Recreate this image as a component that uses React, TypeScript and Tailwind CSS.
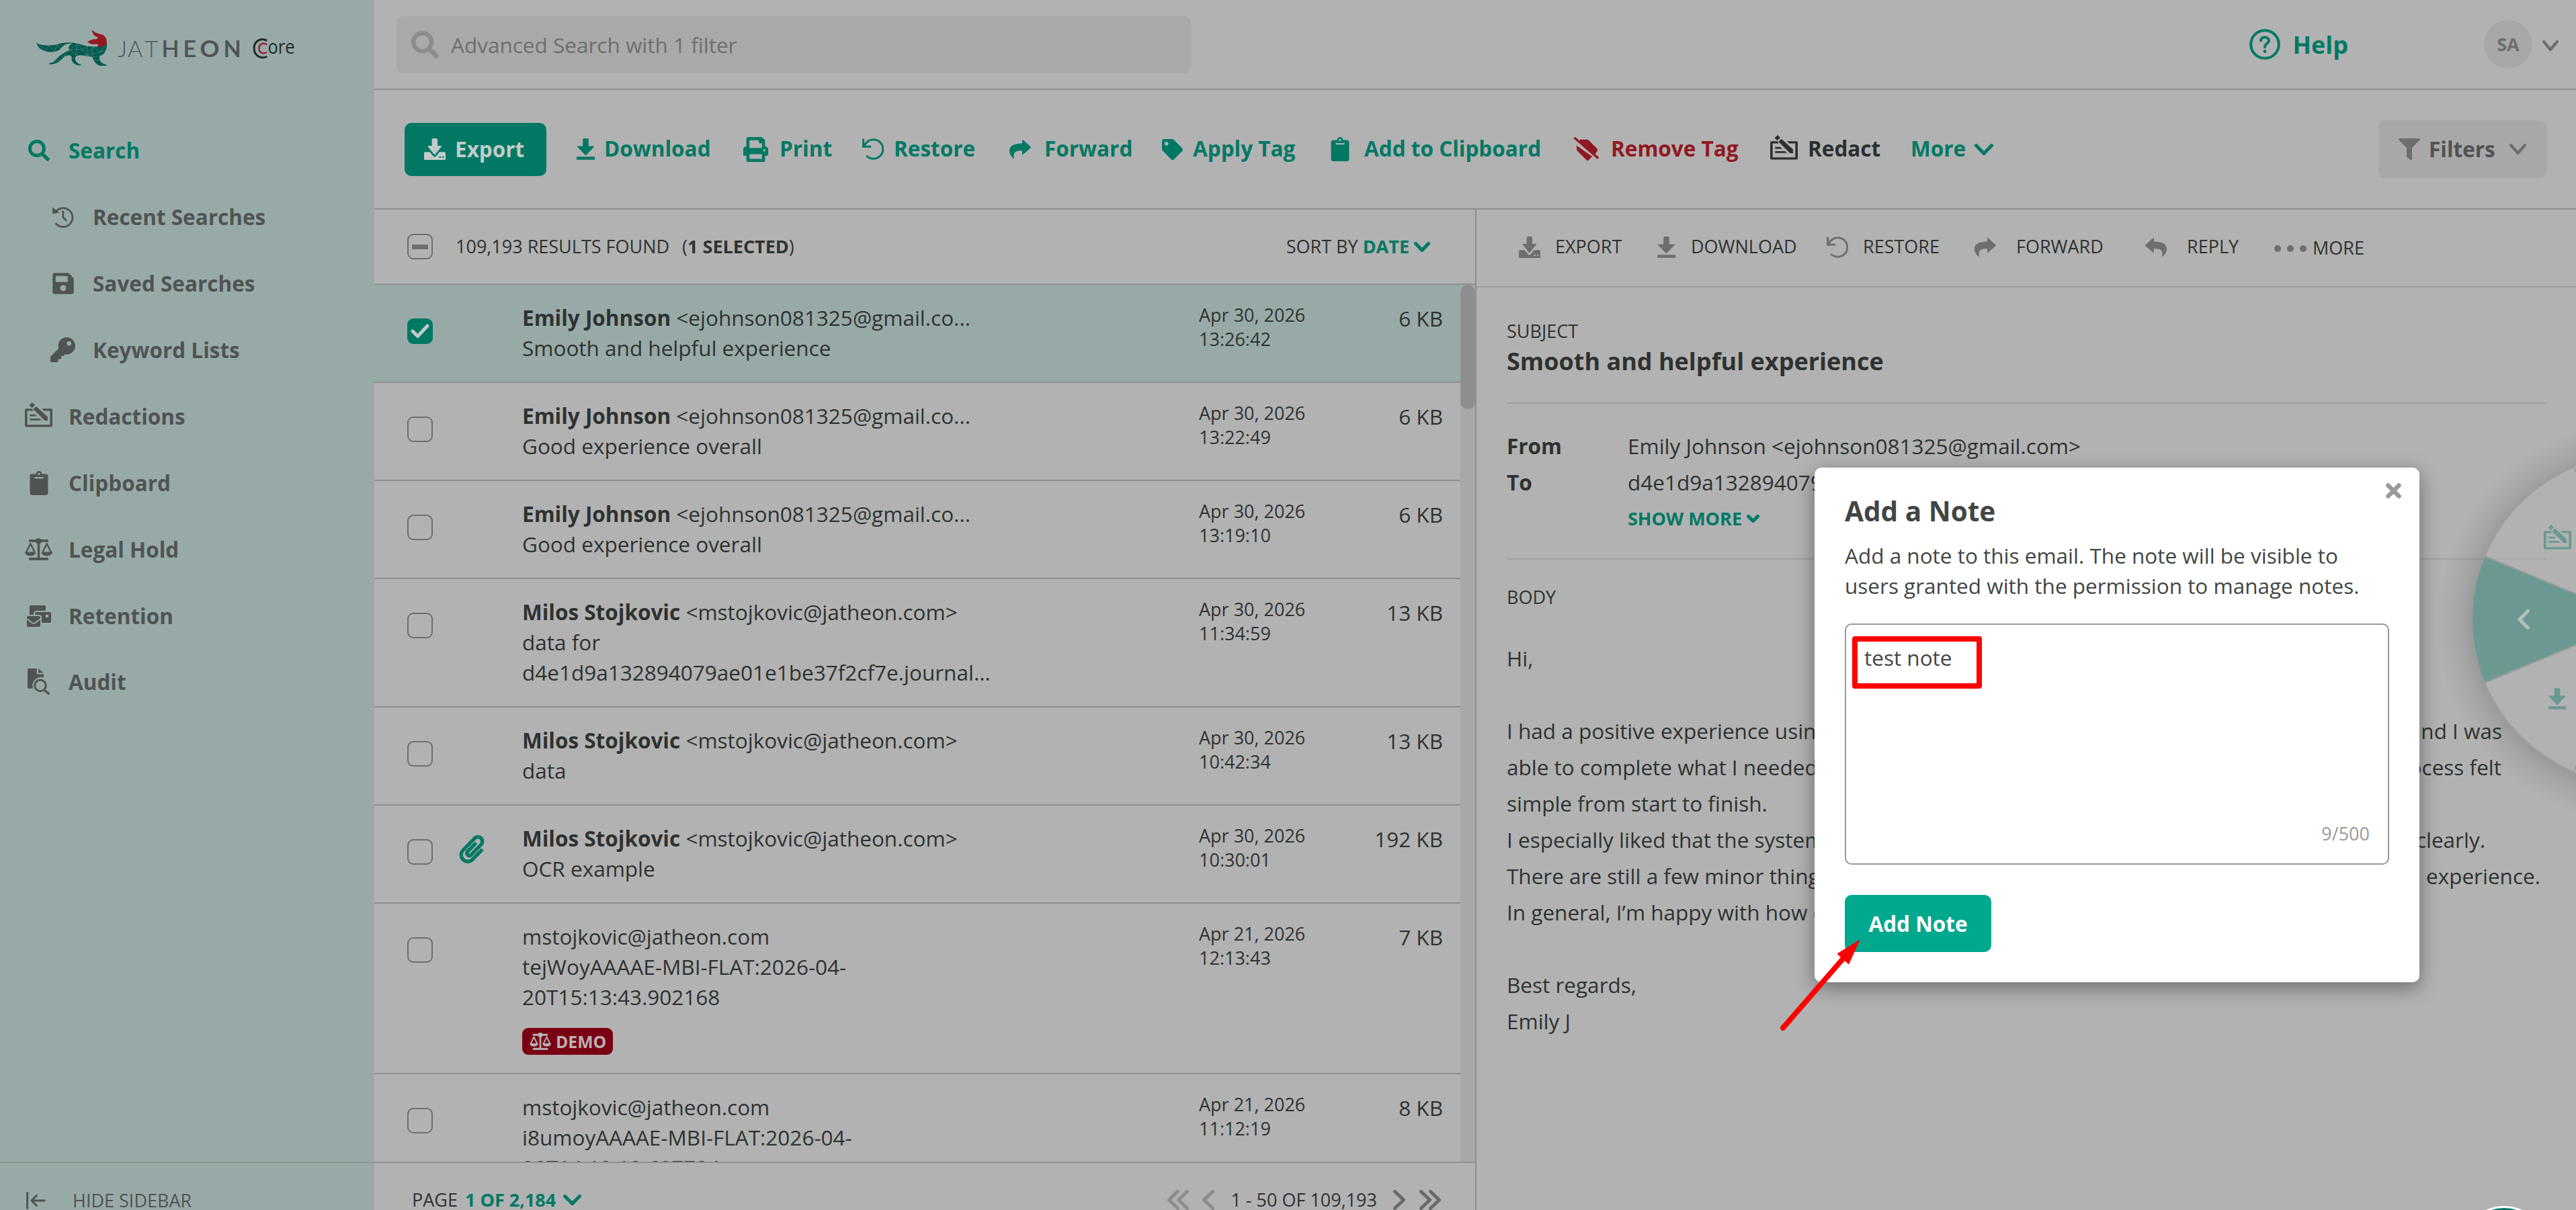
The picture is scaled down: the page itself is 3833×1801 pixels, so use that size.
import React, { useState } from 'react';
import clsx from 'clsx';
import { FaClipboard, FaFilter, FaKey, FaMailBulk, FaPaperclip, FaPrint, FaSave, FaSearch, FaTag } from 'react-icons/fa';

interface IconProps {
  className?: string;
}

interface ChevronProps extends IconProps {
  width: number;
  height: number;
  stroke?: number;
}

interface NavItem {
  label: string;
  icon: React.ReactNode;
  sub?: boolean;
  active?: boolean;
}

interface ToolItem {
  label: string;
  icon: React.ReactNode;
  className: string;
}

interface Email {
  name?: string;
  address: string;
  subject: string[];
  date: string;
  time: string;
  size: string;
  selected?: boolean;
  attachment?: boolean;
  tag?: string;
}

/* ---------- icons ---------- */

const ChevronDown = ({ width, height, stroke = 5, className }: ChevronProps) => {
  const p = stroke / 2;
  return (
    <svg width={width} height={height} className={clsx('shrink-0', className)} fill="none" stroke="currentColor" strokeWidth={stroke} strokeLinecap="round" strokeLinejoin="round">
      <path d={`M${p} ${p}L${width / 2} ${height - p}L${width - p} ${p}`} />
    </svg>
  );
};

const ChevronLeft = ({ width, height, stroke = 5, className }: ChevronProps) => {
  const p = stroke / 2;
  return (
    <svg width={width} height={height} className={clsx('shrink-0', className)} fill="none" stroke="currentColor" strokeWidth={stroke} strokeLinecap="round" strokeLinejoin="round">
      <path d={`M${width - p} ${p}L${p} ${height / 2}L${width - p} ${height - p}`} />
    </svg>
  );
};

const RedactIcon = ({ className }: IconProps) => (
  <svg viewBox="0 0 41 37" width="41" height="37" className={clsx('shrink-0', className)} fill="currentColor">
    <path d="M11 9.3H2Q0 9.3 0 11.3V34.5Q0 36.5 2 36.5H39Q41 36.5 41 34.5V11.3Q41 9.3 39 9.3H25L28.2 12.6H37.4V33.2H3.6V12.6H12.6Z" />
    <path d="M11 0L15 4L10.6 8.2L6.6 4.2Z" />
    <path d="M16.8 5.8L34 21.5V27H29.5L12.4 10Z" />
    <path d="M7.3 17.8H15.4L18 20.4H7.3ZM7.3 24H21.8L25 26.8H7.3Z" />
  </svg>
);

const ScaleIcon = ({ className }: IconProps) => (
  <svg viewBox="0 0 41 33" className={clsx('shrink-0', className)} fill="currentColor">
    <rect x="6" y="2" width="29" height="3.8" rx="1" />
    <circle cx="20.5" cy="4.4" r="4.4" />
    <rect x="18.8" y="4" width="3.4" height="27" />
    <rect x="6" y="29" width="29" height="3.8" rx="1" />
    <path d="M8.3 8.2L14.6 21M8.3 8.2L2 21M32.7 8.2L39 21M32.7 8.2L26.4 21" fill="none" stroke="currentColor" strokeWidth="2.4" strokeLinecap="round" />
    <path d="M0 20.5H16.4Q15.6 26.4 8.2 26.4T0 20.5ZM24.6 20.5H41Q40.2 26.4 32.8 26.4T24.6 20.5Z" />
  </svg>
);

const HistoryIcon = () => (
  <svg viewBox="0 0 32 32" width="32" height="32" fill="none" stroke="currentColor" strokeWidth="2.7" strokeLinecap="round" strokeLinejoin="round">
    <path d="M4.2 9A14 14 0 1 1 5.4 26" />
    <path d="M15.8 7.5V16.5L20.5 21" />
    <path d="M0 1.5L10.5 9.5L0 11.3Z" fill="currentColor" stroke="none" />
  </svg>
);

const AuditIcon = () => (
  <svg viewBox="0 0 33 39" width="33" height="39" fill="currentColor">
    <path d="M1.5 0H13.6V8.6H24V13.4Q18.6 11.8 13.6 14.8Q8 18.6 7.4 24.4Q7.2 27.4 8.4 29.8H1.5Q0 29.8 0 28.3V1.5Q0 0 1.5 0Z" />
    <path d="M16 0.2L24 6.6H16Z" />
    <circle cx="19" cy="25.4" r="8.3" fill="none" stroke="currentColor" strokeWidth="3" />
    <path d="M26.6 33.6L31.4 37.4" fill="none" stroke="currentColor" strokeWidth="3.4" strokeLinecap="round" />
  </svg>
);

const DownloadIcon = ({ className }: IconProps) => (
  <svg viewBox="0 0 27 32" width="27" height="32" className={clsx('shrink-0', className)} fill="currentColor">
    <path d="M9.2 1.6Q9.2 0 10.8 0H16.2Q17.8 0 17.8 1.6V11.6H25.4Q26.4 11.8 25.6 12.9L14.5 24.4Q13.5 25.4 12.5 24.4L1.4 12.9Q.6 11.8 1.6 11.6H9.2Z" />
    <rect y="27.2" width="27" height="4.6" rx=".6" />
  </svg>
);

const ExportIcon = () => (
  <svg viewBox="0 0 32 32" width="32" height="32" className="shrink-0" fill="currentColor">
    <path d="M11.6 1.6Q11.6 0 13.2 0H18.4Q20 0 20 1.6V11H25.4Q26.6 11.2 25.8 12.3L16.8 23.6Q15.8 24.8 14.8 23.6L5.8 12.3Q5 11.2 6.2 11H11.6Z" />
    <path fillRule="evenodd" d="M1.5 20.3H8.6L13.8 26.4Q15.8 28.4 17.8 26.4L23 20.3H30.5Q32 20.3 32 21.8V30.5Q32 32 30.5 32H1.5Q0 32 0 30.5V21.8Q0 20.3 1.5 20.3ZM22.6 26.8V29H25V26.8ZM27 26.8V29H29.4V26.8Z" />
  </svg>
);

const RestoreIcon = () => (
  <svg viewBox="0 0 32 32" width="32" height="32" className="shrink-0" fill="none" stroke="currentColor" strokeWidth="3">
    <path d="M1.6 .5V12.2H13.2" />
    <path d="M2.4 11.6C6 4.8 11 1.7 16.6 1.7A14.2 14.2 0 0 1 16.6 30.2C12.6 30.2 9 28.6 6.4 26" />
  </svg>
);

const ForwardIcon = ({ className }: IconProps) => (
  <svg viewBox="0 0 32 28" width="32" height="28" className={clsx('shrink-0', className)} fill="currentColor">
    <path d="M19 .8Q19 -.6 20.4 .4L31.4 10.2Q32.4 11.2 31.4 12.2L20.4 21.8Q19 22.8 19 21.2V16.2C10 16 4.6 18.4 7 26.8Q7 28.4 5.6 27.4C2.4 24.8 0 21 0 16.8C0 8.4 7.6 5.6 19 5.5Z" />
  </svg>
);

const TagOffIcon = () => (
  <svg viewBox="0 0 37 36" width="37" height="36" className="shrink-0" fill="currentColor">
    <path d="M9 3.8H19.6Q21 3.8 22 4.8L34.6 17.4Q36 19 34.6 20.6L31 26.5L8 7Z" />
    <path d="M1.6 1.8L35.2 30.6" stroke="currentColor" strokeWidth="3.4" strokeLinecap="round" />
    <path d="M4 12.4L27.2 29L21.8 34.2Q20.2 35.6 18.6 34.2L5 20.6Q4 19.6 4 18.2Z" />
  </svg>
);

const HelpIcon = () => (
  <svg viewBox="0 0 46 46" width="46" height="46" fill="none" stroke="currentColor" strokeWidth="4" strokeLinecap="round">
    <circle cx="23" cy="23" r="20.8" />
    <path d="M17 17.5C17.4 14 19.6 12.6 23 12.6C26.6 12.6 29 14.6 29 17.6C29 22 23 21.6 23 27" />
    <path d="M23 33.4V33.6" strokeWidth="4.8" />
  </svg>
);

const HideIcon = () => (
  <svg viewBox="0 0 29 26" width="29" height="26" fill="none" stroke="currentColor" strokeWidth="3" strokeLinecap="round" strokeLinejoin="round">
    <path d="M1.6 1.5V24.5M8 13H27M15.5 5.5L8 13L15.5 20.5" />
  </svg>
);

const Logo = () => (
  <svg viewBox="0 0 400 64" width="400" height="64">
    <g transform="translate(-50 -40) scale(.3954 .3571)">
      <path
        fill="#00594d"
        d="M137 178C150 190 185 192 212 186C240 175 270 174 300 184C325 194 350 196 368 194C385 194 395 190 402 176C404 205 396 226 376 234C370 246 378 266 400 269V274H376C360 268 352 254 348 238C330 236 305 226 288 233C276 244 286 266 306 269L303 273C280 272 266 258 270 238C262 226 250 232 240 238C226 254 212 270 186 268C184 262 192 262 200 259C214 246 226 226 262 208C254 196 262 186 272 181C250 180 238 190 226 206C210 218 190 220 168 212C150 206 142 196 137 178Z"
      />
      <path
        fill="none"
        stroke="#7d9f9a"
        strokeWidth="1.3"
        d="M145 186L170 210L185 190L205 215L214 186L228 202L250 180M262 208L290 184L285 230L262 208L310 205L290 184M310 205L288 232M310 205L330 192L325 232L310 205M325 232L350 196L345 238L325 232L376 215L350 196M376 215L398 190M376 215L378 234L348 238M376 215L400 210M262 208L240 236L268 228M200 260L230 244M355 250L374 250M272 245L286 240"
      />
      <path
        fill="#961822"
        d="M345 123C354 136 374 142 386 144C398 152 402 164 402 180C396 192 384 192 370 198L367 190L372 184H352C340 184 334 178 328 172C340 170 344 162 362 163L372 157C356 152 348 142 345 123Z"
      />
    </g>
    <g fill="#505354" fontFamily="Lato, sans-serif" fontSize="34">
      <text x="125" y="44.5" fontWeight="300">J</text>
      <text x="140" y="44.5" fontWeight="300">A</text>
      <text x="165.5" y="44.5" fontWeight="300">T</text>
      <text x="190.5" y="44.5" fontWeight="600">H</text>
      <text x="222.5" y="44.5" fontWeight="600">E</text>
      <text x="247.5" y="44.5" fontWeight="700" textLength="29" lengthAdjust="spacingAndGlyphs">O</text>
      <text x="282.5" y="44.5" fontWeight="700">N</text>
    </g>
    <g fill="none" strokeLinecap="butt">
      <path stroke="#202a29" strokeWidth="3" d="M347.4 20.4C337 15 328 22 328 31.8C328 42 337 49 347.4 44" />
      <path stroke="#961822" strokeWidth="2.2" d="M347.4 26.4C341 22.4 335.4 26 335.4 32C335.4 38 341 41.4 347.4 37.6" />
    </g>
    <text x="348.5" y="40.3" fill="#202a29" fontSize="30" textLength="40" lengthAdjust="spacingAndGlyphs">ore</text>
  </svg>
);

/* ---------- data ---------- */

const navItems: NavItem[] = [
  { label: 'Search', icon: <FaSearch size={32} />, active: true },
  { label: 'Recent Searches', icon: <HistoryIcon />, sub: true },
  { label: 'Saved Searches', icon: <FaSave size={36} />, sub: true },
  { label: 'Keyword Lists', icon: <FaKey size={37} />, sub: true },
  { label: 'Redactions', icon: <RedactIcon className="-mt-1" /> },
  { label: 'Clipboard', icon: <FaClipboard size={36} /> },
  { label: 'Legal Hold', icon: <ScaleIcon className="h-[33px] w-[41px]" /> },
  { label: 'Retention', icon: <FaMailBulk size={36} /> },
  { label: 'Audit', icon: <AuditIcon /> },
];

const tools: ToolItem[] = [
  { label: 'Download', icon: <DownloadIcon />, className: 'w-[248px] gap-[14px] text-[#007863]' },
  { label: 'Print', icon: <FaPrint size={37} />, className: 'w-[177px] gap-[17px] text-[#007863]' },
  { label: 'Restore', icon: <RestoreIcon />, className: 'w-[219px] gap-[15px] text-[#007863]' },
  { label: 'Forward', icon: <ForwardIcon />, className: 'w-[227px] gap-[20px] text-[#007863]' },
  { label: 'Apply Tag', icon: <FaTag size={31} />, className: 'w-[247px] gap-[15px] text-[#007863]' },
  { label: 'Add to Clipboard', icon: <FaClipboard size={36} />, className: 'w-[366px] gap-[18px] text-[#007863]' },
  { label: 'Remove Tag', icon: <TagOffIcon />, className: 'w-[292px] gap-[18px] text-[#911821]' },
  { label: 'Redact', icon: <RedactIcon className="-mt-1.5" />, className: 'w-[209px] gap-[15px] text-[#2b2f2e]' },
];

const detailTools: ToolItem[] = [
  { label: 'EXPORT', icon: <ExportIcon />, className: 'w-[206px] gap-[22px]' },
  { label: 'DOWNLOAD', icon: <DownloadIcon />, className: 'w-[252px] gap-[23px]' },
  { label: 'RESTORE', icon: <RestoreIcon />, className: 'w-[220px] gap-[22px]' },
  { label: 'FORWARD', icon: <ForwardIcon />, className: 'w-[254px] gap-[30px]' },
  { label: 'REPLY', icon: <ForwardIcon className="-scale-x-100" />, className: 'w-[192px] gap-[30px]' },
];

const emails: Email[] = [
  { name: 'Emily Johnson', address: '<ejohnson081325@gmail.co...', subject: ['Smooth and helpful experience'], date: 'Apr 30, 2026', time: '13:26:42', size: '6 KB', selected: true },
  { name: 'Emily Johnson', address: '<ejohnson081325@gmail.co...', subject: ['Good experience overall'], date: 'Apr 30, 2026', time: '13:22:49', size: '6 KB' },
  { name: 'Emily Johnson', address: '<ejohnson081325@gmail.co...', subject: ['Good experience overall'], date: 'Apr 30, 2026', time: '13:19:10', size: '6 KB' },
  { name: 'Milos Stojkovic', address: '<mstojkovic@jatheon.com>', subject: ['data for', 'd4e1d9a132894079ae01e1be37f2cf7e.journal...'], date: 'Apr 30, 2026', time: '11:34:59', size: '13 KB' },
  { name: 'Milos Stojkovic', address: '<mstojkovic@jatheon.com>', subject: ['data'], date: 'Apr 30, 2026', time: '10:42:34', size: '13 KB' },
  { name: 'Milos Stojkovic', address: '<mstojkovic@jatheon.com>', subject: ['OCR example'], date: 'Apr 30, 2026', time: '10:30:01', size: '192 KB', attachment: true },
  { address: 'mstojkovic@jatheon.com', subject: ['tejWoyAAAAE-MBI-FLAT:2026-04-', '20T15:13:43.902168'], date: 'Apr 21, 2026', time: '12:13:43', size: '7 KB', tag: 'DEMO' },
  { address: 'mstojkovic@jatheon.com', subject: ['i8umoyAAAAE-MBI-FLAT:2026-04-', '20T14:12:19.687734'], date: 'Apr 21, 2026', time: '11:12:19', size: '8 KB' },
];

// each line: start of the text, end of the text, class for the line width
const bodyLines: [string, string, string][] = [
  ['Hi,', '', 'w-[1480px]'],
  ['', '', 'w-[1480px]'],
  ['I had a positive experience using', 'and I was', 'w-[1481px]'],
  ['able to complete what I needed', 'process felt', 'w-[1480px]'],
  ['simple from start to finish.', '', 'w-[1480px]'],
  ['I especially liked that the system', 'clearly.', 'w-[1456px]'],
  ['There are still a few minor things', 'experience.', 'w-[1538px]'],
  ['In general, I’m happy with how easy', '', 'w-[1480px]'],
  ['', '', 'w-[1480px]'],
  ['Best regards,', '', 'w-[1480px]'],
  ['Emily J', '', 'w-[1480px]'],
];

/* ---------- page parts ---------- */

function Sidebar() {
  return (
    <aside className="flex h-full w-[557px] shrink-0 flex-col bg-[#98aaa7]">
      <div className="h-[174px] shrink-0 pt-[40px] pl-[50px]">
        <Logo />
      </div>
      <nav className="flex-1">
        {navItems.map((item) => (
          <div
            key={item.label}
            className={clsx(
              'flex h-[99px] items-center text-[31.5px] font-bold last:h-[97px]',
              item.sub ? 'pl-[67px]' : 'pl-[31px]',
              item.active ? 'text-[#007863]' : 'text-[#505354]'
            )}
          >
            <span className="flex w-[53px] justify-center">{item.icon}</span>
            <span className="ml-[18px]">{item.label}</span>
          </div>
        ))}
      </nav>
      <div className="flex h-[72px] shrink-0 border-t-2 border-[#8a9795] pt-[38px] pl-[39px] text-[#505354]">
        <div className="flex h-[36px] items-center gap-[40px] text-[27px] leading-[34px]">
          <HideIcon />
          HIDE SIDEBAR
        </div>
      </div>
    </aside>
  );
}

function TopBar() {
  return (
    <header className="flex h-[134px] shrink-0 items-center border-b-2 border-[#8f8f8f] pr-[26px] pl-[33px]">
      <div className="flex h-[85px] w-[1182px] items-center gap-[18px] rounded-[10px] bg-[#a9a9a9] pl-[22px] text-[31.5px] text-[#6e6e6e]">
        <FaSearch size={41} className="text-[#8c8c8c]" />
        <span className="mt-px">Advanced Search with 1 filter</span>
      </div>
      <div className="ml-auto flex items-center text-[#007863]">
        <HelpIcon />
        <span className="mt-0.5 ml-[18px] text-[36px] leading-none font-bold">Help</span>
      </div>
      <div className="ml-[202px] flex items-center text-[#6e6e6e]">
        <div className="flex size-[72px] items-center justify-center rounded-full bg-[#a8a8a8] text-[27px] font-bold">SA</div>
        <ChevronDown width={24} height={16} stroke={4.4} className="mt-1 ml-[15px]" />
      </div>
    </header>
  );
}

function Toolbar() {
  return (
    <div className="flex h-[178px] shrink-0 items-center border-b-2 border-[#8f8f8f] pr-[44px] pl-[45px] text-[31.5px] font-bold">
      <button className="mr-[45px] flex h-[79px] w-[211px] items-center gap-[14px] rounded-[10px] bg-[#007863] pl-[29px] text-[#c3cbc9]">
        <ExportIcon />
        Export
      </button>
      {tools.map((tool) => (
        <div key={tool.label} className={clsx('flex shrink-0 items-center', tool.className)}>
          {tool.icon}
          <span className="-mt-0.5 whitespace-nowrap">{tool.label}</span>
        </div>
      ))}
      <div className="flex items-center gap-[13px] text-[#007863]">
        <span className="-mt-0.5">More</span>
        <ChevronDown width={28} height={17} />
      </div>
      <button className="ml-auto flex h-[86px] w-[250px] items-center rounded-[10px] bg-[#a8a8a8] pl-[30px] text-[#505354]">
        <FaFilter size={32} className="text-[#6e6e6e]" />
        <span className="ml-[13px]">Filters</span>
        <ChevronDown width={25} height={16} stroke={4.4} className="ml-[21px] text-[#6e6e6e]" />
      </button>
    </div>
  );
}

function EmailRow({ email }: { email: Email }) {
  return (
    <div className={clsx('flex border-b-2 border-[#8f8f8f] pl-[49px] text-[31.5px] leading-[45px]', email.selected && 'bg-[#98aaa7]')}>
      <div className="w-[75px] shrink-0 pt-[50px]">
        {email.selected ? (
          <div className="flex size-[38px] items-center justify-center rounded-[9px] bg-[#007863]">
            <svg viewBox="0 0 28 22" width="28" height="22" fill="none" stroke="#c3cbc9" strokeWidth="5" strokeLinecap="round" strokeLinejoin="round">
              <path d="M3 11L10.5 18.5L25 3" />
            </svg>
          </div>
        ) : (
          <div className="size-[38px] rounded-[9px] border-2 border-[#6e6e6e]" />
        )}
      </div>
      <div className="w-[96px] shrink-0 pt-[44px]">
        {email.attachment && <FaPaperclip size={42} className="text-[#007863]" />}
      </div>
      <div className="w-[1007px] shrink-0 pt-[26px] pb-[28px] whitespace-nowrap">
        <div>
          {email.name && <span className="font-bold">{email.name} </span>}
          {email.address}
        </div>
        {email.subject.map((line) => (
          <div key={line}>{line}</div>
        ))}
        {email.tag && (
          <div className="mt-[24px] -mb-px flex h-[40px] w-[135px] items-center gap-[7px] rounded-[9px] bg-[#7a0013] pl-[11px] text-[24.75px] font-bold text-[#b9b2b3]">
            <ScaleIcon className="h-[26px] w-[32px]" />
            {email.tag}
          </div>
        )}
      </div>
      <div className="pt-[27px] text-[27px] leading-[36px]">
        <div>{email.date}</div>
        <div>{email.time}</div>
      </div>
      <div className="ml-auto pt-[27px] pr-[26px]">{email.size}</div>
    </div>
  );
}

function EmailList() {
  return (
    <section className="flex w-[1640px] shrink-0 flex-col border-r-2 border-[#8f8f8f]">
      <div className="flex h-[112px] shrink-0 items-center border-b-2 border-[#8f8f8f] pr-[67px] pl-[49px] text-[27px]">
        <div className="flex size-[38px] items-center justify-center rounded-[9px] border-2 border-[#6e6e6e]">
          <div className="h-[7px] w-[24px] bg-[#6e6e6e]" />
        </div>
        <span className="ml-[34px]">109,193 RESULTS FOUND</span>
        <span className="ml-[19px]">
          (<b>1 SELECTED</b>)
        </span>
        <span className="mr-[7px] ml-auto">
          SORT BY <b className="text-[#007863]">DATE</b>
        </span>
        <ChevronDown width={24} height={15} className="text-[#007863]" />
      </div>
      <div className="flex h-[1305px] shrink-0">
        <div className="flex-1 overflow-hidden">
          {emails.map((email) => (
            <EmailRow key={email.time} email={email} />
          ))}
        </div>
        <div className="w-[22px] bg-[#a8a8a8]">
          <div className="h-[185px] rounded-full bg-[#8e8e8e]" />
        </div>
      </div>
      <div className="h-[72px] shrink-0 border-t-2 border-[#8f8f8f] pt-[38px] pr-[51px] pl-[56px]">
        <div className="flex h-[34px] items-center text-[27px] leading-[34px] whitespace-nowrap">
          <span>PAGE</span>
          <b className="ml-[11px] text-[#007863]">1 OF 2,184</b>
          <ChevronDown width={27} height={16} className="ml-[11px] text-[#007863]" />
          <div className="ml-auto flex text-[#8c8c8c]">
            <ChevronLeft width={18} height={30} />
            <ChevronLeft width={18} height={30} className="-ml-[4px]" />
            <ChevronLeft width={18} height={30} className="ml-[20px]" />
          </div>
          <span className="ml-[24px]">1 - 50 OF 109,193</span>
          <div className="ml-[24px] flex text-[#6a6a6a]">
            <ChevronLeft width={18} height={30} className="-scale-x-100" />
            <ChevronLeft width={18} height={30} className="ml-[21px] -scale-x-100" />
            <ChevronLeft width={18} height={30} className="-ml-[4px] -scale-x-100" />
          </div>
        </div>
      </div>
    </section>
  );
}

function EmailDetail() {
  return (
    <section className="flex-1">
      <div className="flex h-[116px] items-center border-b-2 border-[#a0a0a0] pb-[3px] pl-[63px] text-[27px]">
        {detailTools.map((tool) => (
          <div key={tool.label} className={clsx('flex shrink-0 items-center', tool.className)}>
            <span className="text-[#6e6e6e]">{tool.icon}</span>
            <span>{tool.label}</span>
          </div>
        ))}
        <div className="mt-1 flex items-center gap-[9px]">
          {[0, 1, 2].map((dot) => (
            <span key={dot} className="size-[10px] rounded-full bg-[#6e6e6e]" />
          ))}
          <span>MORE</span>
        </div>
      </div>
      <div className="pr-[44px] pl-[45px]">
        <div className="border-b-2 border-[#a0a0a0] pt-[47px] pb-[34px]">
          <div className="text-[27px] leading-[36px]">SUBJECT</div>
          <div className="text-[36px] leading-[54px] font-bold">Smooth and helpful experience</div>
        </div>
        <div className="h-[232px] border-b-2 border-[#a0a0a0] pt-[36px] text-[31.5px] leading-[54px]">
          <div className="flex">
            <b className="w-[180px]">From</b>Emily Johnson &lt;ejohnson081325@gmail.com&gt;
          </div>
          <div className="flex">
            <b className="w-[180px]">To</b>d4e1d9a132894079ae01e1be37f2cf7e
          </div>
          <div className="flex items-center gap-[7px] pl-[180px] text-[27px] font-bold text-[#007863]">
            SHOW MORE
            <ChevronDown width={19} height={12} />
          </div>
        </div>
        <div className="pt-[38px] text-[27px] leading-[36px]">BODY</div>
        <div className="mt-[46px] text-[31.5px] leading-[54px] whitespace-nowrap">
          {bodyLines.map(([start, end, width], i) => (
            <div key={i} className={clsx('flex h-[54px] justify-between', width)}>
              <span>{start}</span>
              <span>{end}</span>
            </div>
          ))}
        </div>
      </div>
    </section>
  );
}

// Round action menu that sticks out of the right edge of the window
function ActionWheel() {
  return (
    <svg className="absolute top-[602px] right-0" width="213" height="640" viewBox="3620 602 213 640">
      <defs>
        <radialGradient id="wheelShadow" gradientUnits="userSpaceOnUse" cx="3924" cy="926" r="300">
          <stop offset=".8" stopColor="#000" stopOpacity=".15" />
          <stop offset=".88" stopColor="#000" stopOpacity=".07" />
          <stop offset="1" stopColor="#000" stopOpacity="0" />
        </radialGradient>
      </defs>
      <path fillRule="evenodd" fill="url(#wheelShadow)" d="M3620 602H3833V1242H3620ZM3678 922A246 246 0 0 0 3924 1168V676A246 246 0 0 0 3678 922Z" />
      <path d="M3924 922L3830 695A246 246 0 0 0 3697 828ZM3924 922L3830 1149A246 246 0 0 1 3697 1016Z" fill="#b2b2b2" fillOpacity=".4" stroke="#a0a0a0" strokeWidth="2.5" />
      <path d="M3924 922L3697 828A246 246 0 0 0 3697 1016Z" fill="#6b9991" stroke="#949c9a" strokeWidth="2" />
      <path d="M3761.500 909.500L3749 922L3761.500 934.500" fill="none" stroke="#b9bfbe" strokeWidth="5" strokeLinecap="round" strokeLinejoin="round" />
      <g transform="translate(3785 781)" className="text-[#6b9991]">
        <RedactIcon />
      </g>
      <g transform="translate(3791.500 1024)" className="text-[#6b9991]">
        <DownloadIcon />
      </g>
    </svg>
  );
}

function NoteModal() {
  const [note, setNote] = useState('test note');

  return (
    <div className="absolute top-[696px] left-[2700px] h-[766px] w-[900px] rounded-[10px] bg-white px-[45px] pt-[38px] text-[#414645] shadow-[0_8px_30px_rgba(0,0,0,0.4)]">
      <svg className="absolute top-[23px] right-[27px] text-[#9a9a9a]" width="23" height="23" fill="none" stroke="currentColor" strokeWidth="6.5" strokeLinecap="round">
        <path d="M3.500 3.500L19.500 19.500M19.500 3.500L3.500 19.500" />
      </svg>
      <h2 className="text-[40.5px] leading-[54px] font-bold">Add a Note</h2>
      <p className="mt-[16px] w-[790px] text-[31.5px] leading-[45px]">
        Add a note to this email. The note will be visible to users granted with the permission to manage notes.
      </p>
      <div className="mt-[34px] flex h-[359px] flex-col rounded-[10px] border-2 border-[#999]">
        <textarea
          value={note}
          onChange={(e) => setNote(e.target.value)}
          maxLength={500}
          className="flex-1 resize-none px-[27px] pt-[26px] text-[31.5px] leading-[45px] outline-none"
        />
        <div className="pr-[27px] pb-[26px] text-right text-[27px] leading-[36px] text-[#999]">{note.length}/500</div>
      </div>
      <button className="mt-[45px] h-[85px] w-[218px] rounded-[10px] bg-[#00a88d] text-[31.5px] font-bold text-white">Add Note</button>
    </div>
  );
}

export default function App() {
  return (
    <div className="relative flex h-[1801px] w-[3833px] overflow-hidden bg-[#b2b2b2] font-['Open_Sans',sans-serif] text-[#2e3231]">
      <Sidebar />
      <main className="flex flex-1 flex-col">
        <TopBar />
        <Toolbar />
        <div className="flex flex-1">
          <EmailList />
          <EmailDetail />
        </div>
      </main>

      <ActionWheel />
      <div className="absolute top-[1795px] left-[3663px] size-[126px] rounded-full border-[3px] border-white bg-[#007863]" />
      <NoteModal />

      {/* Markers over the dialog */}
      <div className="absolute top-[947px] left-[2756px] h-[78px] w-[193px] rounded-[4px] border-8 border-[#ff0000]" />
      <svg className="absolute top-[1390px] left-[2640px]" width="140" height="150" viewBox="2640 1390 140 150" fill="#ff0000">
        <path d="M2653 1530L2744 1425" stroke="#ff0000" strokeWidth="8" strokeLinecap="round" />
        <path d="M2768 1398L2733.500 1419.500L2741 1427L2751 1435.500Z" />
      </svg>
    </div>
  );
}
